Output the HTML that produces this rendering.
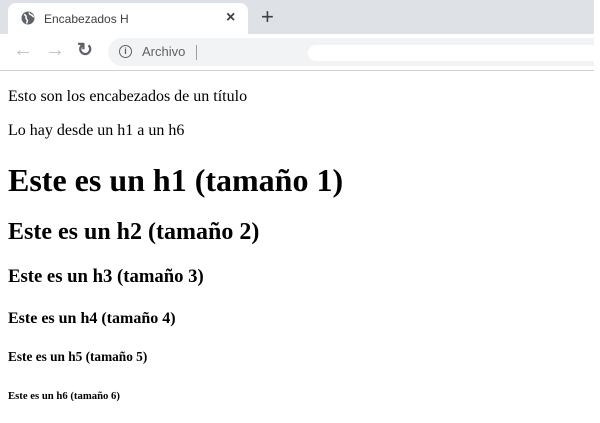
<!DOCTYPE html>
<html><head><style>
body{margin:0;width:600px;height:423px;background:#fff;position:relative;overflow:hidden;font-family:"Liberation Serif",serif;}
.tabbar{position:absolute;left:0;top:0;width:594px;height:34px;background:#dee1e6;}
.tab{position:absolute;left:8px;top:3px;width:240px;height:31px;background:#fff;border-radius:8px 8px 0 0;}
.tt{position:absolute;left:36px;top:9px;font:12px "Liberation Sans",sans-serif;color:#3c4043;}
.tool{position:absolute;left:0;top:34px;width:594px;height:36px;background:#fff;border-bottom:1px solid #d0d0d0;}
.omni{position:absolute;left:108px;top:4px;width:486px;height:28px;background:#f1f3f4;border-radius:14px 0 0 14px;}
.wh{position:absolute;left:200px;top:7px;width:380px;height:16px;background:#fff;border-radius:8px;}
.t{position:absolute;left:8px;white-space:nowrap;color:#000;}
</style></head><body>
<div class="tabbar"><div class="tab">
<svg style="position:absolute;left:13px;top:8px" width="14" height="14" viewBox="0 0 14 14"><circle cx="7" cy="7" r="6.5" fill="#5f6368"/><path d="M3 3.5c1.5 0.5 2.5 1.5 2 3s1 1.5 1.5 3l-1 3M8.5 1.5c-0.5 1.5 0.5 2 2 2.5s1 2 2.5 1.5" stroke="#fff" stroke-width="1.5" fill="none"/></svg>
<div class="tt">Encabezados H</div>
<div style="position:absolute;left:218px;top:6px;font:bold 16px 'Liberation Sans',sans-serif;color:#3c4043">×</div>
</div>
<div style="position:absolute;left:261px;top:4px;font:22px 'Liberation Sans',sans-serif;color:#3c4043">+</div>
</div>
<div class="tool">
<div style="position:absolute;left:13px;top:5px;font:20px 'Liberation Sans',sans-serif;color:#bdc1c6">←</div>
<div style="position:absolute;left:45px;top:5px;font:20px 'Liberation Sans',sans-serif;color:#bdc1c6">→</div>
<div style="position:absolute;left:77px;top:5px;font:bold 19px 'Liberation Sans',sans-serif;color:#5f6368">↻</div>
<div class="omni">
<div style="position:absolute;left:11px;top:7px;width:11px;height:11px;border:1.5px solid #5f6368;border-radius:50%;font:bold 9px 'Liberation Sans',sans-serif;text-align:center;line-height:11px;color:#5f6368">i</div>
<div style="position:absolute;left:34px;top:6px;font:13px 'Liberation Sans',sans-serif;color:#5f6368">Archivo</div>
<div style="position:absolute;left:88px;top:7px;width:1px;height:15px;background:#9aa0a6"></div>
<div class="wh"></div>
</div>
</div>
<div class="t" style="top:88px;font-size:16px;line-height:18px">Esto son los encabezados de un título</div>
<div class="t" style="top:122px;font-size:16px;line-height:18px">Lo hay desde un h1 a un h6</div>
<div class="t" style="top:162px;font-size:32px;line-height:37px;font-weight:bold">Este es un h1 (tamaño 1)</div>
<div class="t" style="top:218px;font-size:24px;line-height:28px;font-weight:bold">Este es un h2 (tamaño 2)</div>
<div class="t" style="top:266px;font-size:18.7px;line-height:22px;font-weight:bold">Este es un h3 (tamaño 3)</div>
<div class="t" style="top:310px;font-size:16px;line-height:18px;font-weight:bold">Este es un h4 (tamaño 4)</div>
<div class="t" style="top:349px;font-size:13.3px;line-height:15px;font-weight:bold">Este es un h5 (tamaño 5)</div>
<div class="t" style="top:390px;font-size:10.7px;line-height:13px;font-weight:bold">Este es un h6 (tamaño 6)</div>
</body></html>
